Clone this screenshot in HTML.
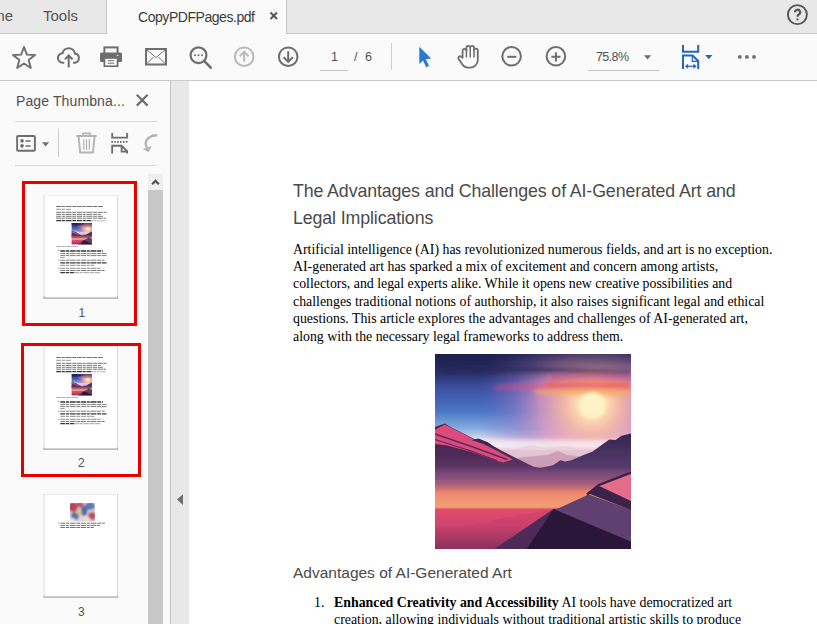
<!DOCTYPE html>
<html><head><meta charset="utf-8">
<style>
*{margin:0;padding:0;box-sizing:border-box}
html,body{width:817px;height:624px;overflow:hidden;background:#fff;font-family:"Liberation Sans",sans-serif}
.a{position:absolute}
#tabbar{left:0;top:0;width:817px;height:34px;background:#e8e8e8;border-bottom:1px solid #c6c6c6}
#acttab{left:106px;top:0;width:181px;height:34px;background:#fafafa;border-left:1px solid #c6c6c6;border-right:1px solid #c6c6c6}
.tabtxt{color:#4b4b4b;white-space:nowrap;line-height:1}
#toolbar{left:0;top:34px;width:817px;height:47px;background:#fafafa;border-bottom:1px solid #c9c9c9}
#sidebar{left:0;top:81px;width:171px;height:543px;background:#fafafa;border-right:1px solid #c6c6c6}
#strip{left:171px;top:81px;width:18px;height:543px;background:#e8e8e8}
#doc{left:189px;top:81px;width:628px;height:543px;background:#fff;overflow:hidden}
svg.full{position:absolute;left:0;top:0;width:817px;height:624px}
</style></head><body>
<div id="tabbar" class="a"></div>
<div id="acttab" class="a"></div>
<div class="a tabtxt" style="left:-27px;top:8px;font-size:15px;color:#555">Home</div>
<div class="a tabtxt" style="left:43px;top:8px;font-size:15px;color:#555">Tools</div>
<div class="a tabtxt" style="left:138px;top:10px;letter-spacing:-0.45px;font-size:14px;color:#3a3a3a">CopyPDFPages.pdf</div>
<div id="toolbar" class="a"></div>
<div id="sidebar" class="a"></div>
<div id="strip" class="a"></div>
<div id="doc" class="a"></div>
<!--THUMBS--><svg class="full" viewBox="0 0 817 624">
<defs>
 <linearGradient id="th1" x1="0" y1="0" x2="0" y2="1">
  <stop offset="0" stop-color="#2a3070"/><stop offset="0.3" stop-color="#7a68b8"/><stop offset="0.45" stop-color="#f0c8c0"/><stop offset="0.55" stop-color="#c8b0c8"/><stop offset="0.65" stop-color="#7a4a78"/><stop offset="0.8" stop-color="#e88070"/><stop offset="1" stop-color="#6a3060"/>
 </linearGradient>
 <clipPath id="th3c"><rect x="70" y="503" width="25" height="18.6"/></clipPath>
 <filter id="thb" x="-10%" y="-10%" width="120%" height="120%"><feGaussianBlur stdDeviation="0.9"/></filter>
 <radialGradient id="th3" cx="0.5" cy="0.5" r="0.6">
  <stop offset="0" stop-color="#e8d8d0"/><stop offset="0.4" stop-color="#6a80c8"/><stop offset="0.7" stop-color="#c84860"/><stop offset="1" stop-color="#a03050"/>
 </radialGradient>
</defs>
<rect x="43.50" y="195.00" width="74.50" height="104.00" fill="#dadada" opacity="1"/>
<rect x="43.50" y="296.50" width="74.50" height="2.00" fill="#8c8c8c" opacity="0.75"/>
<rect x="44.50" y="195.50" width="72.50" height="102.00" fill="#ffffff" opacity="1"/>
<path d="M56.20,206.50 H102.90" stroke="#222" stroke-width="0.91" opacity="0.71" stroke-dasharray="5,0.7,3,0.7,6,0.7,4,0.7"/>
<path d="M56.20,209.30 H71.00" stroke="#222" stroke-width="0.84" opacity="0.57" stroke-dasharray="5,0.7,3,0.7,6,0.7,4,0.7"/>
<path d="M56.20,212.30 H106.50" stroke="#222" stroke-width="0.84" opacity="0.76" stroke-dasharray="5,0.7,3,0.7,6,0.7,4,0.7"/>
<path d="M56.20,214.40 H100.70" stroke="#222" stroke-width="0.84" opacity="0.71" stroke-dasharray="5,0.7,3,0.7,6,0.7,4,0.7"/>
<path d="M56.20,216.30 H102.90" stroke="#222" stroke-width="0.84" opacity="0.71" stroke-dasharray="5,0.7,3,0.7,6,0.7,4,0.7"/>
<path d="M56.20,218.20 H105.80" stroke="#222" stroke-width="0.84" opacity="0.76" stroke-dasharray="5,0.7,3,0.7,6,0.7,4,0.7"/>
<path d="M56.20,220.70 H91.00" stroke="#222" stroke-width="1.26" opacity="0.90" stroke-dasharray="5,0.7,3,0.7,6,0.7,4,0.7"/>
<path d="M91.00,220.70 H105.80" stroke="#222" stroke-width="0.70" opacity="0.47" stroke-dasharray="5,0.7,3,0.7,6,0.7,4,0.7"/>
<path d="M56.20,246.50 H78.30" stroke="#222" stroke-width="0.70" opacity="0.52" stroke-dasharray="5,0.7,3,0.7,6,0.7,4,0.7"/>
<path d="M58.00,250.60 H59.20" stroke="#222" stroke-width="0.70" opacity="0.76" stroke-dasharray="5,0.7,3,0.7,6,0.7,4,0.7"/>
<path d="M60.30,251.00 H102.90" stroke="#222" stroke-width="1.26" opacity="0.90" stroke-dasharray="5,0.7,3,0.7,6,0.7,4,0.7"/>
<path d="M60.30,253.60 H106.50" stroke="#222" stroke-width="0.84" opacity="0.71" stroke-dasharray="5,0.7,3,0.7,6,0.7,4,0.7"/>
<path d="M60.30,255.60 H106.50" stroke="#222" stroke-width="0.84" opacity="0.71" stroke-dasharray="5,0.7,3,0.7,6,0.7,4,0.7"/>
<path d="M60.30,257.50 H64.70" stroke="#222" stroke-width="0.77" opacity="0.57" stroke-dasharray="5,0.7,3,0.7,6,0.7,4,0.7"/>
<path d="M58.00,260.20 H59.20" stroke="#222" stroke-width="0.70" opacity="0.76" stroke-dasharray="5,0.7,3,0.7,6,0.7,4,0.7"/>
<path d="M60.30,260.20 H104.70" stroke="#222" stroke-width="0.84" opacity="0.71" stroke-dasharray="5,0.7,3,0.7,6,0.7,4,0.7"/>
<path d="M60.30,262.90 H106.50" stroke="#222" stroke-width="1.26" opacity="0.90" stroke-dasharray="5,0.7,3,0.7,6,0.7,4,0.7"/>
<path d="M60.30,265.30 H94.40" stroke="#222" stroke-width="0.77" opacity="0.66" stroke-dasharray="5,0.7,3,0.7,6,0.7,4,0.7"/>
<path d="M58.00,268.30 H59.20" stroke="#222" stroke-width="0.70" opacity="0.76" stroke-dasharray="5,0.7,3,0.7,6,0.7,4,0.7"/>
<path d="M60.30,268.30 H100.70" stroke="#222" stroke-width="0.77" opacity="0.66" stroke-dasharray="5,0.7,3,0.7,6,0.7,4,0.7"/>
<path d="M60.30,270.50 H104.70" stroke="#222" stroke-width="0.84" opacity="0.71" stroke-dasharray="5,0.7,3,0.7,6,0.7,4,0.7"/>
<path d="M60.30,272.70 H73.90" stroke="#222" stroke-width="1.26" opacity="0.90" stroke-dasharray="5,0.7,3,0.7,6,0.7,4,0.7"/>
<path d="M73.90,272.70 H100.70" stroke="#222" stroke-width="0.77" opacity="0.57" stroke-dasharray="5,0.7,3,0.7,6,0.7,4,0.7"/>
<use href="#land" transform="translate(71.4,223) scale(0.105,0.1108)"/>
<rect x="43.50" y="346.00" width="74.50" height="104.00" fill="#dadada" opacity="1"/>
<rect x="43.50" y="447.50" width="74.50" height="2.00" fill="#8c8c8c" opacity="0.75"/>
<rect x="44.50" y="346.50" width="72.50" height="102.00" fill="#ffffff" opacity="1"/>
<path d="M56.20,357.50 H102.90" stroke="#222" stroke-width="0.91" opacity="0.71" stroke-dasharray="5,0.7,3,0.7,6,0.7,4,0.7"/>
<path d="M56.20,360.30 H71.00" stroke="#222" stroke-width="0.84" opacity="0.57" stroke-dasharray="5,0.7,3,0.7,6,0.7,4,0.7"/>
<path d="M56.20,363.30 H106.50" stroke="#222" stroke-width="0.84" opacity="0.76" stroke-dasharray="5,0.7,3,0.7,6,0.7,4,0.7"/>
<path d="M56.20,365.40 H100.70" stroke="#222" stroke-width="0.84" opacity="0.71" stroke-dasharray="5,0.7,3,0.7,6,0.7,4,0.7"/>
<path d="M56.20,367.30 H102.90" stroke="#222" stroke-width="0.84" opacity="0.71" stroke-dasharray="5,0.7,3,0.7,6,0.7,4,0.7"/>
<path d="M56.20,369.20 H105.80" stroke="#222" stroke-width="0.84" opacity="0.76" stroke-dasharray="5,0.7,3,0.7,6,0.7,4,0.7"/>
<path d="M56.20,371.70 H91.00" stroke="#222" stroke-width="1.26" opacity="0.90" stroke-dasharray="5,0.7,3,0.7,6,0.7,4,0.7"/>
<path d="M91.00,371.70 H105.80" stroke="#222" stroke-width="0.70" opacity="0.47" stroke-dasharray="5,0.7,3,0.7,6,0.7,4,0.7"/>
<path d="M56.20,397.50 H78.30" stroke="#222" stroke-width="0.70" opacity="0.52" stroke-dasharray="5,0.7,3,0.7,6,0.7,4,0.7"/>
<path d="M58.00,401.60 H59.20" stroke="#222" stroke-width="0.70" opacity="0.76" stroke-dasharray="5,0.7,3,0.7,6,0.7,4,0.7"/>
<path d="M60.30,402.00 H102.90" stroke="#222" stroke-width="1.26" opacity="0.90" stroke-dasharray="5,0.7,3,0.7,6,0.7,4,0.7"/>
<path d="M60.30,404.60 H106.50" stroke="#222" stroke-width="0.84" opacity="0.71" stroke-dasharray="5,0.7,3,0.7,6,0.7,4,0.7"/>
<path d="M60.30,406.60 H106.50" stroke="#222" stroke-width="0.84" opacity="0.71" stroke-dasharray="5,0.7,3,0.7,6,0.7,4,0.7"/>
<path d="M60.30,408.50 H64.70" stroke="#222" stroke-width="0.77" opacity="0.57" stroke-dasharray="5,0.7,3,0.7,6,0.7,4,0.7"/>
<path d="M58.00,411.20 H59.20" stroke="#222" stroke-width="0.70" opacity="0.76" stroke-dasharray="5,0.7,3,0.7,6,0.7,4,0.7"/>
<path d="M60.30,411.20 H104.70" stroke="#222" stroke-width="0.84" opacity="0.71" stroke-dasharray="5,0.7,3,0.7,6,0.7,4,0.7"/>
<path d="M60.30,413.90 H106.50" stroke="#222" stroke-width="1.26" opacity="0.90" stroke-dasharray="5,0.7,3,0.7,6,0.7,4,0.7"/>
<path d="M60.30,416.30 H94.40" stroke="#222" stroke-width="0.77" opacity="0.66" stroke-dasharray="5,0.7,3,0.7,6,0.7,4,0.7"/>
<path d="M58.00,419.30 H59.20" stroke="#222" stroke-width="0.70" opacity="0.76" stroke-dasharray="5,0.7,3,0.7,6,0.7,4,0.7"/>
<path d="M60.30,419.30 H100.70" stroke="#222" stroke-width="0.77" opacity="0.66" stroke-dasharray="5,0.7,3,0.7,6,0.7,4,0.7"/>
<path d="M60.30,421.50 H104.70" stroke="#222" stroke-width="0.84" opacity="0.71" stroke-dasharray="5,0.7,3,0.7,6,0.7,4,0.7"/>
<path d="M60.30,423.70 H73.90" stroke="#222" stroke-width="1.26" opacity="0.90" stroke-dasharray="5,0.7,3,0.7,6,0.7,4,0.7"/>
<path d="M73.90,423.70 H100.70" stroke="#222" stroke-width="0.77" opacity="0.57" stroke-dasharray="5,0.7,3,0.7,6,0.7,4,0.7"/>
<use href="#land" transform="translate(71.4,374) scale(0.105,0.1108)"/>
<rect x="43.50" y="494.00" width="74.50" height="104.00" fill="#dadada" opacity="1"/>
<rect x="43.50" y="595.50" width="74.50" height="2.00" fill="#8c8c8c" opacity="0.75"/>
<rect x="44.50" y="494.50" width="72.50" height="102.00" fill="#ffffff" opacity="1"/>
<g clip-path="url(#th3c)"><g filter="url(#thb)"><rect x="66" y="499" width="33" height="26" fill="#dcd4dc"/><ellipse cx="73" cy="507" rx="5" ry="5" fill="#b84058"/><ellipse cx="80" cy="504.5" rx="4" ry="3" fill="#c85068"/><ellipse cx="90" cy="506" rx="5" ry="4" fill="#5878b0"/><ellipse cx="84" cy="511" rx="3.5" ry="5" fill="#4a6aa8"/><ellipse cx="75" cy="516" rx="4" ry="4" fill="#5a70a8"/><ellipse cx="79" cy="512" rx="3" ry="2.5" fill="#e0c070"/><ellipse cx="92" cy="516" rx="4" ry="4" fill="#c04a60"/><ellipse cx="87" cy="519" rx="3" ry="2" fill="#f0e0d8"/><ellipse cx="72" cy="520" rx="3" ry="2" fill="#f0e8f0"/></g></g>
<path d="M58.00,523.20 H59.20" stroke="#222" stroke-width="0.70" opacity="0.76" stroke-dasharray="5,0.7,3,0.7,6,0.7,4,0.7"/>
<path d="M60.30,523.20 H104.90" stroke="#222" stroke-width="0.84" opacity="0.76" stroke-dasharray="5,0.7,3,0.7,6,0.7,4,0.7"/>
<path d="M60.30,525.40 H100.00" stroke="#222" stroke-width="0.84" opacity="0.76" stroke-dasharray="5,0.7,3,0.7,6,0.7,4,0.7"/>
<path d="M60.30,527.50 H93.80" stroke="#222" stroke-width="0.84" opacity="0.76" stroke-dasharray="5,0.7,3,0.7,6,0.7,4,0.7"/>
<rect x="23.5" y="182.5" width="112" height="142" fill="none" stroke="#e80000" stroke-width="3"/>
<rect x="22.5" y="344.5" width="117" height="131" fill="none" stroke="#e80000" stroke-width="3"/>
</svg>
<div class="a tabtxt" style="left:78.5px;top:307px;font-size:12px;color:#555">1</div>
<div class="a tabtxt" style="left:78px;top:457px;font-size:12px;color:#555">2</div>
<div class="a tabtxt" style="left:78px;top:606px;font-size:12px;color:#555">3</div>
<!--/THUMBS-->

<svg class="full" viewBox="0 0 817 624" fill="none" stroke-linecap="butt">
 <!-- tab close x -->
 <path d="M270.5,12.5 L277,19 M277,12.5 L270.5,19" stroke="#555" stroke-width="2"/>
 <!-- help -->
 <circle cx="797.4" cy="14.6" r="9.5" stroke="#555" stroke-width="1.9"/>
 <path d="M795,12.3 a2.55,2.55 0 1 1 3.8,2.2 c-0.9,0.5 -1.3,0.9 -1.3,2.2" stroke="#555" stroke-width="2.2"/>
 <circle cx="797.5" cy="19.4" r="1.1" fill="#555"/>

 <!-- star -->
 <path d="M24.00,47.00 L26.88,54.64 L35.03,55.02 L28.66,60.11 L30.82,67.98 L24.00,63.50 L17.18,67.98 L19.34,60.11 L12.97,55.02 L21.12,54.64 Z" stroke="#6e6e6e" stroke-width="1.9" stroke-linejoin="round"/>
 <!-- cloud upload -->
 <path d="M64.3,62.7 H62.7 A4.7,4.7 0 0 1 62.5,53.3 A6.3,6.3 0 0 1 74.9,53.6 A4.6,4.6 0 0 1 75,62.7 H73" stroke="#6e6e6e" stroke-width="2"/>
 <path d="M68.7,67.5 V55.8 M64.9,59.4 L68.7,55.5 L72.5,59.4" stroke="#6e6e6e" stroke-width="2"/>
 <!-- printer -->
 <rect x="104.4" y="47.4" width="13.2" height="7" stroke="#6e6e6e" stroke-width="2"/>
 <rect x="100" y="52.5" width="22" height="9.5" rx="1.5" fill="#6e6e6e"/>
 <rect x="103.5" y="57.5" width="15" height="9.5" fill="#6e6e6e"/>
 <rect x="105.3" y="58.8" width="11.4" height="6.6" fill="#fafafa"/>
 <path d="M107.8,60.7 H114.2 M107.8,63.2 H114.2" stroke="#6e6e6e" stroke-width="1"/>
 <rect x="116.8" y="55" width="1.6" height="1" fill="#ddd"/>
 <!-- envelope -->
 <rect x="146" y="49" width="20" height="15.5" stroke="#6e6e6e" stroke-width="2"/>
 <path d="M147,50 L156,57.5 L165,50 M147,63.5 L153.5,57 M165,63.5 L158.5,57" stroke="#6e6e6e" stroke-width="1"/>
 <!-- search -->
 <circle cx="198.5" cy="55.2" r="7.9" stroke="#6e6e6e" stroke-width="2.2"/>
 <path d="M204.3,61.2 L210.8,67.7" stroke="#6e6e6e" stroke-width="2.6" stroke-linecap="round"/>
 <circle cx="195" cy="55.3" r="1" fill="#6e6e6e"/><circle cx="198.5" cy="55.3" r="1" fill="#6e6e6e"/><circle cx="202" cy="55.3" r="1" fill="#6e6e6e"/>
 <!-- up circle -->
 <circle cx="244.2" cy="56.7" r="9.3" stroke="#b9b9b9" stroke-width="2"/>
 <path d="M244.2,61.8 V51.8 M239.8,56.2 L244.2,51.6 L248.6,56.2" stroke="#b9b9b9" stroke-width="2"/>
 <!-- down circle -->
 <circle cx="288.2" cy="56.7" r="9.3" stroke="#6e6e6e" stroke-width="2"/>
 <path d="M288.2,51.3 V61.6 M283.6,57.3 L288.2,61.9 L292.8,57.3" stroke="#6e6e6e" stroke-width="2"/>
 <!-- page underline -->
 <path d="M320,70.5 H348" stroke="#c4c4c4" stroke-width="1"/>
 <!-- separator -->
 <path d="M391.5,43 V70" stroke="#cfcfcf" stroke-width="1"/>
 <!-- blue arrow -->
 <path d="M419.3,46.8 L431.2,58.6 L425.8,59.2 L429,66 L426.2,67.2 L423,60.4 L419.3,64 Z" fill="#2a79cf"/>
 <!-- hand -->
 <path d="M462.6,58.5 V50.8 a1.9,1.9 0 0 1 3.8,0 V47.8 a1.9,1.9 0 0 1 3.8,0 V47.8 a1.9,1.9 0 0 1 3.8,0 V50.5 a1.9,1.9 0 0 1 3.8,0 V60 a7.7,7.7 0 0 1 -7.7,7.7 H468 a6.5,6.5 0 0 1 -5.4,-2.9 L458.6,59 a1.8,1.8 0 0 1 2.6,-2.4 L462.6,58" stroke="#6e6e6e" stroke-width="1.8" stroke-linejoin="round"/>
 <path d="M466.4,49 V57.5 M470.2,48 V57.5 M474,50.5 V57.5" stroke="#6e6e6e" stroke-width="1.5"/>
 <!-- minus -->
 <circle cx="511.6" cy="56.3" r="9.3" stroke="#6e6e6e" stroke-width="2"/>
 <path d="M507.2,56.8 H516.3" stroke="#6e6e6e" stroke-width="2"/>
 <!-- plus -->
 <circle cx="555.9" cy="56.3" r="9.3" stroke="#6e6e6e" stroke-width="2"/>
 <path d="M551.3,56.8 H560.5 M555.9,52.2 V61.5" stroke="#6e6e6e" stroke-width="2"/>
 <!-- zoom underline & tri -->
 <path d="M588,70.5 H659" stroke="#c4c4c4" stroke-width="1"/>
 <path d="M644,55.3 H651.2 L647.6,59.6 Z" fill="#6e6e6e"/>
 <!-- fit icon -->
 <path d="M683,45 V51.8 H698.2 V45" stroke="#2266bb" stroke-width="2"/>
 <path d="M683,69 V55.5 H692.6 L698.2,61 V69" stroke="#2266bb" stroke-width="2"/>
 <path d="M692.3,55.5 V61.3 H698.2" stroke="#2266bb" stroke-width="1.2"/>
 <path d="M686,66.3 H695.5" stroke="#2266bb" stroke-width="1.2"/>
 <path d="M685.3,66.3 L687.8,64.3 V68.3 Z M696.2,66.3 L693.7,64.3 V68.3 Z" fill="#2266bb" stroke="#2266bb" stroke-width="0.6"/>
 <path d="M705.2,55 H712.4 L708.8,59.3 Z" fill="#2266bb"/>
 <!-- dots -->
 <circle cx="739.8" cy="56.9" r="1.9" fill="#6e6e6e"/><circle cx="746.9" cy="56.9" r="1.9" fill="#6e6e6e"/><circle cx="754" cy="56.9" r="1.9" fill="#6e6e6e"/>
</svg>
<div class="a tabtxt" style="left:331px;top:51px;font-size:12.5px;color:#505050">1</div>
<div class="a tabtxt" style="left:354px;top:51px;font-size:12.5px;color:#505050">/</div>
<div class="a tabtxt" style="left:365px;top:51px;font-size:12.5px;color:#505050">6</div>
<div class="a tabtxt" style="left:596px;top:51px;font-size:12.5px;color:#505050;letter-spacing:-0.6px">75.8%</div>

<svg class="full" viewBox="0 0 817 624" fill="none">
 <!-- sidebar close -->
 <path d="M136.8,94.8 L147.6,105.6 M147.6,94.8 L136.8,105.6" stroke="#6e6e6e" stroke-width="2.2"/>
 <path d="M15,121.5 H157" stroke="#d6d6d6" stroke-width="1"/>
 <path d="M15,165.5 H157" stroke="#d6d6d6" stroke-width="1"/>
 <!-- list icon -->
 <rect x="17.1" y="136" width="17.8" height="14.8" rx="1" stroke="#6e6e6e" stroke-width="1.9"/>
 <circle cx="22" cy="140.9" r="1.8" fill="#6e6e6e"/><circle cx="22" cy="145.9" r="1.8" fill="#6e6e6e"/>
 <path d="M25.5,141 H30.6 M25.5,146 H30.6" stroke="#6e6e6e" stroke-width="1.6"/>
 <path d="M42,142.2 H49.2 L45.6,146.4 Z" fill="#6e6e6e"/>
 <path d="M58.5,129 V157" stroke="#cdcdcd" stroke-width="1"/>
 <!-- trash -->
 <path d="M83,135.2 V133.4 H90 V135.2" stroke="#b4b4b4" stroke-width="1.6"/>
 <path d="M76.4,136 H96.7" stroke="#b4b4b4" stroke-width="2"/>
 <path d="M78.6,137 L80.2,152.5 H92.9 L94.5,137" stroke="#b4b4b4" stroke-width="1.9"/>
 <path d="M83.8,139.3 V149.8 M86.5,139.3 V149.8 M89.3,139.3 V149.8" stroke="#b4b4b4" stroke-width="1.2"/>
 <!-- extract -->
 <path d="M112.2,132.9 V137.6 H127.1 V132.9" stroke="#6e6e6e" stroke-width="1.9"/>
 <path d="M111.3,141.9 H128.2" stroke="#6e6e6e" stroke-width="1.8" stroke-dasharray="1.7,1.2"/>
 <path d="M112.2,153.6 V145.8 H121.6 L127.1,151.2 V153.6" stroke="#6e6e6e" stroke-width="1.9"/>
 <path d="M121.6,146 V151.6 H127.1" stroke="#6e6e6e" stroke-width="1.8"/>
 <!-- rotate (clipped) -->
 <path d="M157.2,135.3 C151,135.2 145.8,138.6 145.7,143.4 C145.7,145.2 146.2,146.6 147,147.6" stroke="#b4b4b4" stroke-width="2.4"/>
 <path d="M143,149 L151.6,146 L148.6,152.2 Z" fill="#b4b4b4"/>
 <!-- scrollbar -->
 <rect x="148" y="174" width="15" height="16" fill="#efefef"/>
 <rect x="148" y="190" width="15" height="434" fill="#c8c8c8"/>
 <path d="M152.2,184.2 L155.5,180.8 L158.8,184.2" stroke="#505050" stroke-width="2.2"/>
 <!-- collapse tri -->
 <path d="M177,499.6 L183,494.2 V505 Z" fill="#6e6e6e"/>
</svg>
<div class="a tabtxt" style="left:16px;top:94px;font-size:14px;color:#505050;letter-spacing:0.12px">Page Thumbna...</div>

<style>
.ttl{font-family:"Liberation Sans",sans-serif;font-size:17.8px;letter-spacing:-0.12px;color:#4a4a4a;white-space:nowrap;line-height:27px}
.para{font-family:"Liberation Serif",serif;font-size:13.85px;color:#000;white-space:nowrap;line-height:17.4px}
.sub{font-family:"Liberation Sans",sans-serif;font-size:15.5px;color:#4a4a4a;white-space:nowrap;line-height:20px}
</style>
<div class="a ttl" style="left:293px;top:178px">The Advantages and Challenges of AI-Generated Art and<br>Legal Implications</div>
<div class="a para" style="left:293px;top:240.6px">Artificial intelligence (AI) has revolutionized numerous fields, and art is no exception.<br>AI-generated art has sparked a mix of excitement and concern among artists,<br>collectors, and legal experts alike. While it opens new creative possibilities and<br>challenges traditional notions of authorship, it also raises significant legal and ethical<br>questions. This article explores the advantages and challenges of AI-generated art,<br>along with the necessary legal frameworks to address them.</div>
<div class="a sub" style="left:293px;top:563px">Advantages of AI-Generated Art</div>
<div class="a para" style="left:314px;top:594px">1.</div>
<div class="a para" style="left:334px;top:594px"><b>Enhanced Creativity and Accessibility</b> AI tools have democratized art<br>creation, allowing individuals without traditional artistic skills to produce</div>
<svg width="196" height="195" viewBox="0 0 196 195" style="position:absolute;left:435px;top:354px">
 <defs>
  <linearGradient id="skyV" x1="0" y1="0" x2="0" y2="96" gradientUnits="userSpaceOnUse">
   <stop offset="0" stop-color="#1c2452"/>
   <stop offset="0.18" stop-color="#2a3470"/>
   <stop offset="0.35" stop-color="#3c4ea0"/>
   <stop offset="0.6" stop-color="#4a78c4"/>
   <stop offset="0.78" stop-color="#88aee0"/>
   <stop offset="0.9" stop-color="#e8e0ee"/>
   <stop offset="1" stop-color="#faf2f4"/>
  </linearGradient>
  <linearGradient id="topDark" x1="0" y1="0" x2="0" y2="30" gradientUnits="userSpaceOnUse">
   <stop offset="0" stop-color="#1e1e48" stop-opacity="0.7"/>
   <stop offset="1" stop-color="#1e1e48" stop-opacity="0"/>
  </linearGradient>
  <radialGradient id="sunGlow" cx="157" cy="50" r="115" gradientUnits="userSpaceOnUse">
   <stop offset="0" stop-color="#fff6d0"/>
   <stop offset="0.1" stop-color="#ffe4b4"/>
   <stop offset="0.25" stop-color="#f8b8a8" stop-opacity="0.95"/>
   <stop offset="0.45" stop-color="#e498c0" stop-opacity="0.8"/>
   <stop offset="0.7" stop-color="#9a78c8" stop-opacity="0.45"/>
   <stop offset="1" stop-color="#6a60c0" stop-opacity="0"/>
  </radialGradient>
  <linearGradient id="ground" x1="0" y1="96" x2="0" y2="196" gradientUnits="userSpaceOnUse">
   <stop offset="0" stop-color="#b890b0"/>
   <stop offset="0.2" stop-color="#6a3a70"/>
   <stop offset="0.33" stop-color="#a05a78"/>
   <stop offset="0.42" stop-color="#ec8870"/>
   <stop offset="0.57" stop-color="#f4a074"/>
   <stop offset="0.595" stop-color="#e24c6c"/>
   <stop offset="0.75" stop-color="#d04470"/>
   <stop offset="1" stop-color="#6a2a58"/>
  </linearGradient>
  <linearGradient id="mtL" x1="0" y1="70" x2="0" y2="130" gradientUnits="userSpaceOnUse">
   <stop offset="0" stop-color="#3e2250"/>
   <stop offset="0.5" stop-color="#4e2a58"/>
   <stop offset="1" stop-color="#6e4072"/>
  </linearGradient>
  <linearGradient id="mtR" x1="0" y1="79" x2="0" y2="130" gradientUnits="userSpaceOnUse">
   <stop offset="0" stop-color="#34264e"/>
   <stop offset="0.6" stop-color="#52386a"/>
   <stop offset="1" stop-color="#6e4072"/>
  </linearGradient>
  <filter id="bl" x="-5%" y="-5%" width="110%" height="110%"><feGaussianBlur stdDeviation="0.5"/></filter>
  <filter id="bl2" x="-20%" y="-50%" width="140%" height="200%"><feGaussianBlur stdDeviation="2"/></filter>
  <filter id="bl3" x="-50%" y="-50%" width="200%" height="200%"><feGaussianBlur stdDeviation="1.6"/></filter>
  <linearGradient id="hazeG" x1="0" y1="112" x2="0" y2="138" gradientUnits="userSpaceOnUse">
   <stop offset="0" stop-color="#6e4072" stop-opacity="0"/>
   <stop offset="0.25" stop-color="#7a4a7a" stop-opacity="0.85"/>
   <stop offset="0.55" stop-color="#9a5a80" stop-opacity="0.75"/>
   <stop offset="1" stop-color="#c06a78" stop-opacity="0"/>
  </linearGradient>
  <clipPath id="imgclip"><rect width="196" height="195"/></clipPath>
 </defs>
 <g id="land" clip-path="url(#imgclip)">
 <rect width="196" height="100" fill="url(#skyV)"/>
 <rect width="196" height="100" fill="url(#sunGlow)"/>
 <rect width="196" height="32" fill="url(#topDark)"/>
 <g filter="url(#bl2)">
  <path d="M8,15 C50,11 100,13 196,17 L196,20 C120,18 60,17 8,17.5 Z" fill="#2a2250" opacity="0.7"/>
  <path d="M115,21 C140,19 170,20 196,21 L196,26 C160,25 130,25 115,25 Z" fill="#c04888" opacity="0.6"/>
  <path d="M60,32 C110,29 150,30 196,31 L196,35 C140,35 100,35 60,35 Z" fill="#d85080" opacity="0.7"/>
  <path d="M110,28 C150,26 175,27 196,28 L196,34 C160,33 140,32 110,32 Z" fill="#f06050" opacity="0.75"/>
  <path d="M100,36 C150,34 170,35 196,36 L196,42 C160,41 130,41 100,40 Z" fill="#f8a858" opacity="0.75"/>
 </g>
 <circle cx="157.5" cy="51.5" r="13" fill="#fff2c8" filter="url(#bl3)"/>
 <rect y="86" width="196" height="10" fill="#fbf0f4" opacity="0.8" filter="url(#bl2)"/>
 <rect y="96" width="196" height="99" fill="url(#ground)"/>
 <g filter="url(#bl)">
  <!-- distant pale hills -->
  <path d="M40,96 L60,93 L80,95 L96,91 L110,94 L130,92 L150,96 L196,95 L196,112 L40,114 Z" fill="#ecd0dc" opacity="0.85"/>
  <path d="M55,108 L90,103 L112,101 L123,97 L132,101 L160,104 L196,106 L196,120 L55,122 Z" fill="#c894b0" opacity="0.75"/>
  <!-- left mountain -->
  <path d="M0,73 L9.8,69.6 L15.9,73.2 L40.4,85.5 L43.5,84.9 L52.6,88.5 L58.8,92.8 L98,112.4 L118,118 L118,126 L0,126 Z" fill="url(#mtL)"/>
  <path d="M0,75.5 L9.8,70.6 L16,73.8 L40.4,86 L60,95.8 L78,105.5 L68,108.5 L56,105 L36,97.7 L12,91.6 L0,90 Z" fill="#dc4c7c"/>
  <path d="M0,80 L38,93 L72,105.5" stroke="#5e2a5c" stroke-width="1.5" fill="none"/>
  <path d="M0,85.5 L36,97 L62,106.5" stroke="#5e2a5c" stroke-width="1.3" fill="none"/>
  <path d="M36,86 L43.5,84.6 L52.6,88.2 L58.8,92.6 L66,96.5 L52,91 Z" fill="#3a2850"/>
  <!-- right mountain -->
  <path d="M196,79.4 L186.6,81.8 L180.5,86 L174.3,85.5 L169.4,89 L157.2,97.7 L147.4,101.4 L136.4,106.3 L130.3,107.5 L125.4,106.3 L118,111.2 L96,116 L80,120 L80,126 L196,126 Z" fill="url(#mtR)"/>
 </g>
 <rect y="112" width="196" height="26" fill="url(#hazeG)"/>
 <g filter="url(#bl)">
  <!-- right pink slab -->
  <path d="M123,154.5 L153.7,140.4 L196,155.7 L196,187.8 L160,172.4 L118.5,155.1 Z" fill="#5e4070"/>
  <path d="M153.7,139.5 L164,130 L196,146.8 L196,156 Z" fill="#3a2448"/>
  <path d="M162,131 L196,118.5 L196,147 Z" fill="#e26c8a"/>
  <path d="M152,140.5 L164,131 L196,118.6" stroke="#3a2040" stroke-width="2.4" fill="none"/>
  <!-- foreground -->
  <path d="M0,178 L50,168 L90,160 L118.5,155 L100,170 L58,196 L0,196 Z" fill="#c03a68" opacity="0.35"/>
  <path d="M118.5,155 L58,196 L196,196 L196,187.8 Z" fill="#4e2a58"/>
  <path d="M118.5,155 L91,196 L196,196 L196,187.8 L160,172.4 Z" fill="#2a1838"/>
</g>
 </g>
</svg>
</body></html>
